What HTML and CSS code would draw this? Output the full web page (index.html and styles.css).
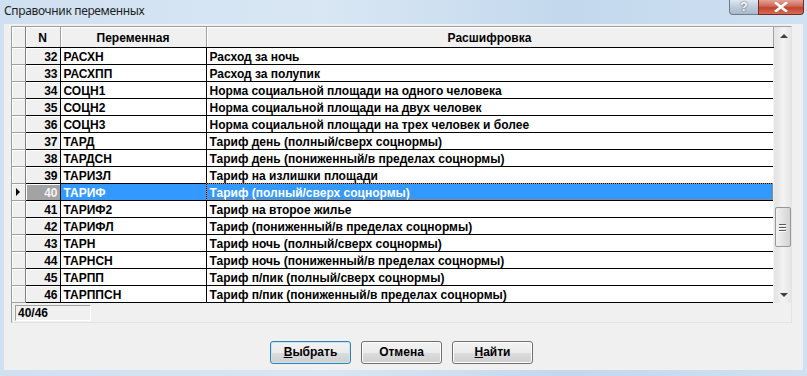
FILE: index.html
```html
<!DOCTYPE html>
<html lang="ru">
<head>
  <meta charset="UTF-8" />
  <title>Справочник переменных</title>
  <link rel="stylesheet" href="styles.css">
</head>
<body>
  <div class="window">
    <div class="titlebar">
      <div class="title">Справочник переменных</div>
      <div class="caption-btns">
        <div class="cap-btn help">?</div>
        <div class="cap-btn close">
          <svg width="14" height="10" viewBox="0 0 14 10"><path d="M2 1 L12 9 M12 1 L2 9" stroke="#fff" stroke-width="2.6" stroke-linecap="square"/></svg>
        </div>
      </div>
    </div>
    <div class="client">
      <div class="panel">
        <div class="grid-area">
          <table class="grid">
            <colgroup>
              <col class="c-ind"><col class="c-n"><col class="c-var"><col class="c-desc">
            </colgroup>
            <thead>
              <tr><th class="ind"></th><th>N</th><th>Переменная</th><th>Расшифровка</th></tr>
            </thead>
            <tbody id="rows"></tbody>
          </table>
          <div class="vscroll">
            <div class="arrow up"></div>
            <div class="track">
              <div class="thumb"><span></span><span></span><span></span></div>
            </div>
            <div class="arrow down"></div>
          </div>
        </div>
        <div class="status"><div class="counter">40/46</div></div>
      </div>
      <div class="buttons">
        <button class="btn default"><u>В</u>ыбрать</button>
        <button class="btn">Отмена</button>
        <button class="btn"><u>Н</u>айти</button>
      </div>
    </div>
  </div>
  <script>
    const data = [
      [32, 'РАСХН', 'Расход за ночь'],
      [33, 'РАСХПП', 'Расход за полупик'],
      [34, 'СОЦН1', 'Норма социальной площади на одного человека'],
      [35, 'СОЦН2', 'Норма социальной площади на двух человек'],
      [36, 'СОЦН3', 'Норма социальной площади на трех человек и более'],
      [37, 'ТАРД', 'Тариф день (полный/сверх соцнормы)'],
      [38, 'ТАРДСН', 'Тариф день (пониженный/в пределах соцнормы)'],
      [39, 'ТАРИЗЛ', 'Тариф на излишки площади'],
      [40, 'ТАРИФ', 'Тариф (полный/сверх соцнормы)'],
      [41, 'ТАРИФ2', 'Тариф на второе жилье'],
      [42, 'ТАРИФЛ', 'Тариф (пониженный/в пределах соцнормы)'],
      [43, 'ТАРН', 'Тариф ночь (полный/сверх соцнормы)'],
      [44, 'ТАРНСН', 'Тариф ночь (пониженный/в пределах соцнормы)'],
      [45, 'ТАРПП', 'Тариф п/пик (полный/сверх соцнормы)'],
      [46, 'ТАРППСН', 'Тариф п/пик (пониженный/в пределах соцнормы)']
    ];
    const tbody = document.getElementById('rows');
    data.forEach(function (r) {
      const tr = document.createElement('tr');
      if (r[0] === 40) tr.className = 'selected';
      tr.innerHTML = '<td class="ind">' + (r[0] === 40 ? '<i class="marker"></i>' : '') + '</td>' +
        '<td class="num">' + r[0] + '</td><td class="var">' + r[1] + '</td><td class="desc">' + r[2] + '</td>';
      tbody.appendChild(tr);
    });
  </script>
</body>
</html>
```

FILE: styles.css
```css
* { box-sizing: border-box; margin: 0; padding: 0; }
body {
  width: 807px; height: 376px; overflow: hidden;
  font-family: 'Liberation Sans', Arial, sans-serif;
  background: #b9d1ea;
}
.window {
  width: 807px; height: 376px;
  background: linear-gradient(90deg, #cfe0f1 0%, #d9e7f4 40%, #c3d8ed 70%, #cfe1f2 100%);
  display: flex; flex-direction: column;
}
.titlebar {
  height: 24px; display: flex; align-items: flex-start;
  padding-left: 4px;
}
.title {
  font-family: 'Noto Sans', 'Open Sans', sans-serif;
  font-size: 12px; letter-spacing: -0.35px; color: #1e1e1e; margin-top: 2px;
}
.caption-btns { margin-left: auto; margin-right: 3px; display: flex; }
.cap-btn {
  height: 15px; border: 1px solid #6d7b8d; border-top: none;
  display: flex; align-items: center; justify-content: center;
}
.cap-btn.help {
  width: 29px; border-radius: 0 0 0 4px; border-right: none;
  background: linear-gradient(#dfe8f2, #bdcbdc 50%, #a9b9cc);
  color: #fff; font-weight: bold; font-size: 12px; line-height: 1;
  text-shadow: 0 0 2px #333;
}
.cap-btn.close {
  width: 46px; border-radius: 0 0 4px 0; border-color: #7a2a22;
  background: linear-gradient(#e3a396, #cf6654 45%, #c0432f 55%, #d66e52);
}
.client {
  flex: 1; margin: 0 4px 6px 4px;
  background: #f0f0f0;
  padding: 2px 11px 0 7px;
  display: flex; flex-direction: column;
}
.panel {
  border: 1px solid #a0a0a0; border-right-color: #e3e3e3; border-bottom-color: #e3e3e3;
  background: #f0f0f0;
}
.grid-area { display: flex; }
.grid {
  width: 761px; table-layout: fixed; border-collapse: collapse;
  font-size: 12px; font-weight: bold; color: #000;
}
.c-ind { width: 13px; }
.c-n { width: 35px; }
.c-var { width: 146px; }
.c-desc { width: 567px; }
.grid th {
  height: 20px; background: #f0f0f0;
  border-right: 1px solid #a0a0a0; border-bottom: 1px solid #000;
  box-shadow: inset 1px 1px 0 #fff;
  text-align: center; font-weight: bold; padding-top: 2px;
}
.grid td {
  height: 17px; padding: 2px 3px 0; white-space: nowrap; overflow: hidden;
  border-bottom: 1px solid #000; border-right: 1px solid #000;
  background: #fff; line-height: 14px;
}
.grid td.ind, .grid th.ind {
  background: #f0f0f0; border-right: 1px solid #808080;
  border-bottom-color: #a0a0a0; box-shadow: inset 1px 1px 0 #fff;
  padding: 0; position: relative;
}
.grid td.num {
  background: #f0f0f0; text-align: right; padding-right: 2px;
  box-shadow: inset 1px 1px 0 #fff;
}
.grid td.desc { border-right: none; }
.grid tr.selected td.var, .grid tr.selected td.desc {
  background: #3399ff; color: #fff;
}
.grid tr.selected td.desc { outline: 1px dotted #d27a32; outline-offset: -1px; }
.grid tr.selected td.num { background: #a3a3a3; color: #f4f4f4; }
.marker {
  position: absolute; left: 4px; top: 4px;
  border-left: 4px solid #000; border-top: 4px solid transparent; border-bottom: 4px solid transparent;
}
.vscroll {
  width: 17px; display: flex; flex-direction: column;
  background: linear-gradient(90deg, #e3e3e3, #f3f3f3 50%, #e6e6e6);
  border-left: 1px solid #e8e8e8;
}
.arrow { height: 17px; position: relative; }
.arrow::after {
  content: ''; position: absolute; left: 5px;
  border-left: 4px solid transparent; border-right: 4px solid transparent;
}
.arrow.up::after { top: 7px; border-bottom: 4px solid #404040; }
.arrow.down::after { top: 7px; border-top: 4px solid #404040; }
.track { flex: 1; padding-top: 163px; }
.thumb {
  width: 16px; height: 40px;
  border: 1px solid #979797; border-radius: 2px;
  background: linear-gradient(90deg, #f1f1f1, #e3e3e3 50%, #d3d3d3);
  display: flex; flex-direction: column; align-items: center; justify-content: center; gap: 2px;
}
.thumb span { width: 7px; height: 1px; background: #5a5a5a; box-shadow: 0 1px 0 #fff; }
.status { height: 19px; padding: 2px 3px; }
.counter {
  width: 76px; height: 16px; padding-left: 2px;
  border: 1px solid #a0a0a0; border-right-color: #fff; border-bottom-color: #fff;
  font-size: 12px; font-weight: bold; line-height: 14px;
}
.buttons {
  display: flex; justify-content: center; gap: 10px;
  margin-top: 18px;
}
.btn {
  width: 81px; height: 23px;
  font-family: 'Liberation Sans', Arial, sans-serif; font-size: 12px; font-weight: bold;
  color: #000;
  border: 1px solid #707070; border-radius: 3px;
  background: linear-gradient(#f2f2f2, #ebebeb 50%, #dddddd 51%, #cfcfcf);
  box-shadow: inset 0 0 0 1px #fcfcfc;
}
.btn.default { border-color: #3c7fb1; box-shadow: inset 0 0 0 1px #bfe6f9; }
.btn u { text-decoration: underline; }
```
